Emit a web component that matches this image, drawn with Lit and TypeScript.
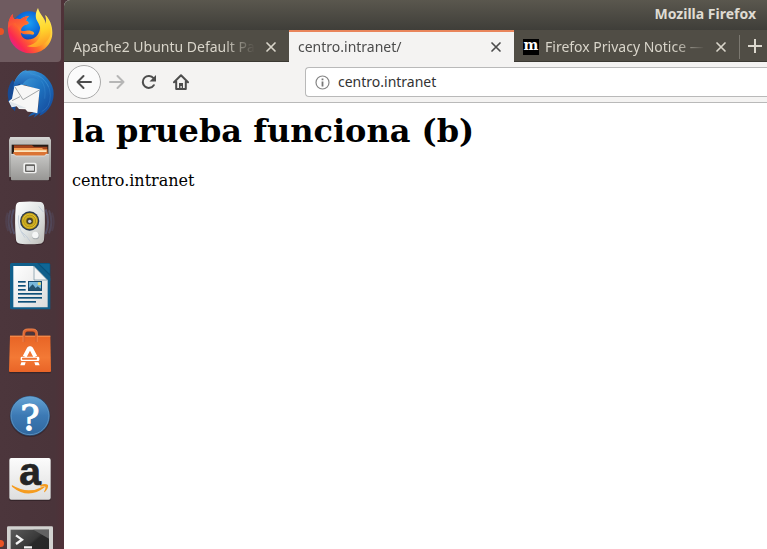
import { LitElement, html, svg, css, type TemplateResult } from "lit";
import { customElement, property } from "lit/decorators.js";
import { classMap } from "lit/directives/class-map.js";

interface LauncherApp {
  name: string;
  running?: boolean;
  focused?: boolean;
  icon: TemplateResult;
}

const firefox = svg`
  <defs>
    <radialGradient id="ffBlue" cx=".5" cy=".35" r=".6">
      <stop offset="0" stop-color="#1aa0f5"/><stop offset=".6" stop-color="#0b66d8"/><stop offset="1" stop-color="#1b3096"/>
    </radialGradient>
    <linearGradient id="ffBody" x1=".9" y1=".2" x2=".1" y2=".8">
      <stop offset="0" stop-color="#ffe44a"/><stop offset=".35" stop-color="#ffb52a"/>
      <stop offset=".6" stop-color="#ff6a2a"/><stop offset=".85" stop-color="#fb2a50"/><stop offset="1" stop-color="#e3208a"/>
    </linearGradient>
    <linearGradient id="ffTail" x1=".3" y1="0" x2=".5" y2="1">
      <stop offset="0" stop-color="#fff36a"/><stop offset=".6" stop-color="#ffd62c"/><stop offset="1" stop-color="#ff9a25"/>
    </linearGradient>
    <linearGradient id="ffHead" x1="0" y1="0" x2=".6" y2="1">
      <stop offset="0" stop-color="#f83a3e"/><stop offset="1" stop-color="#ff7a2c"/>
    </linearGradient>
  </defs>
  <circle cx="87" cy="84" r="50" fill="url(#ffBlue)"/>
  <path fill="url(#ffBody)" d="M38 42C26 56 21 76 25 100C30 136 58 160 91 160C130 160 157 132 157 98C157 76 149 57 136 45C139 60 139 70 136 80C133 64 126 52 119 44C126 84 119 112 92 118C72 121 62 108 63 98C72 105 86 102 99 104C106 100 102 95 92 92C80 90 72 95 65 92C58 88 62 79 76 74C89 72 88 66 78 62C80 56 83 52 87 48C78 48 68 52 62 58C55 56 47 56 42 58C38 52 38 46 38 42Z"/>
  <path fill="url(#ffHead)" d="M38 42C26 56 24 70 25 84C32 74 40 70 46 70L62 98C62 84 68 78 76 74C89 72 88 66 78 62C80 56 83 52 87 48C76 48 68 52 62 58C55 56 47 56 42 58C39 52 38 46 38 42Z"/>
  <path fill="url(#ffTail)" d="M114 24C106 38 105 52 112 64C122 80 127 99 116 116C108 129 94 136 80 138C112 149 145 130 151 104C155 83 148 57 136 45C139 54 139 64 138 71C133 51 119 43 114 24Z"/>`;

const thunderbird = svg`
  <defs>
    <linearGradient id="tbWing" x1="0" y1="0" x2="1" y2="1">
      <stop offset="0" stop-color="#4fa7df"/><stop offset=".5" stop-color="#1f75c2"/><stop offset="1" stop-color="#123f92"/>
    </linearGradient>
    <linearGradient id="tbBack" x1="0" y1="0" x2="0" y2="1">
      <stop offset="0" stop-color="#3996dc"/><stop offset="1" stop-color="#1650a2"/>
    </linearGradient>
  </defs>
  <path fill="#174b95" d="M38 48C24 64 20 88 26 108L22 106L30 120L34 130L45 142L50 110L58 76Z"/>
  <path fill="url(#tbWing)" d="M74 22C112 12 151 38 160 77C166 111 147 144 118 156L122 146L101 161L107 150L84 158L94 148L114 138L118 78L72 62L43 78C38 58 48 36 68 22L81 17Z"/>
  <path fill="url(#tbBack)" d="M40 68C43 46 57 28 81 17L74 26C91 24 106 33 115 48C96 38 80 43 68 60C60 59 49 70 43 82Z"/>
  <path fill="#0e3572" d="M48 65L60 59L57 68Z"/>
  <path fill="#f7f7f6" d="M43 67L65 62L119 76L112 148L96 144L83 143L76 136L57 135L50 127L35 130L26 112L36 104Z"/>
  <path fill="none" stroke="#a4a7a8" stroke-width="3" d="M45 69L69 107L118 78M36 110L60 98"/>
  <path fill="#c9d5df" opacity=".5" d="M28 112L35 128L49 124L57 133L78 132L62 125L48 119Z"/>
  <path fill="none" stroke="#57a9e3" stroke-width="2" opacity=".35" d="M115 34Q151 58 151 94T125 143M124 50Q139 69 134 104M90 29Q132 34 146 69"/>`;

const files = svg`
  <defs>
    <linearGradient id="fmTop" x1="0" y1="0" x2="0" y2="1"><stop offset="0" stop-color="#c8c8c6"/><stop offset="1" stop-color="#8c8b89"/></linearGradient>
    <linearGradient id="fmFront" x1="0" y1="0" x2="0" y2="1"><stop offset="0" stop-color="#c7c7c5"/><stop offset="1" stop-color="#979694"/></linearGradient>
  </defs>
  <path fill="#29191c" opacity=".5" d="M28 149H152V158H28Z"/>
  <path fill="url(#fmTop)" d="M31 27H148L153 36V147H27V36Z"/>
  <path fill="#ddd" d="M31 27H148L151 35H29Z" opacity=".6"/>
  <rect x="35" y="50" width="110" height="36" fill="#261b17"/>
  <path fill="#a3441d" d="M42 52H96L102 56H142V82H42Z"/>
  <path fill="#f39b50" d="M42 60H126L130 64H142V83H42Z"/>
  <path fill="#fbe4bd" d="M42 67H139V84H42Z"/>
  <path fill="#db7434" d="M40 72H142V85H40Z"/>
  <path fill="url(#fmFront)" d="M33 78H42L47 83H134L138 78H147V154Q147 157 144 157H36Q33 157 33 154Z"/>
  <path fill="none" stroke="#e7e7e6" stroke-width="2" d="M34 79H42L47 84H134L138 79H146"/>
  <rect x="70" y="104" width="40" height="32" rx="6" fill="#f0f0ef"/>
  <rect x="75" y="109" width="30" height="23" rx="3" fill="#666563"/>
  <rect x="79" y="114" width="23" height="14" fill="#ddd"/>`;

const music = svg`
  <defs>
    <linearGradient id="spBox" x1="0" y1="0" x2="1" y2="1"><stop offset="0" stop-color="#fff"/><stop offset=".55" stop-color="#dfe3e3"/><stop offset="1" stop-color="#bbb9b5"/></linearGradient>
    <radialGradient id="spCone"><stop offset=".25" stop-color="#a98c08"/><stop offset=".8" stop-color="#e9c735"/><stop offset="1" stop-color="#95780c"/></radialGradient>
  </defs>
  <g fill="none" stroke="#5f6a90" stroke-width="6">
    <path opacity=".5" d="M41 52Q27 89 43 126M137 52Q151 89 137 126"/>
    <path opacity=".35" d="M32 55Q18 89 34 124M147 55Q161 89 147 124"/>
    <path opacity=".2" d="M23 62Q13 90 25 117M156 62Q166 90 156 117"/>
  </g>
  <rect x="46" y="31" width="88" height="128" rx="16" fill="#27171c" opacity=".45"/>
  <path fill="url(#spBox)" d="M58 30Q89 27 122 30Q132 32 133 46Q137 90 132 143Q130 154 119 155Q89 159 61 155Q49 153 48 143Q43 90 47 45Q48 32 58 30Z"/>
  <path fill="none" stroke="#b8c4d4" stroke-width="3" opacity=".7" d="M56 70Q50 105 75 137M65 120Q80 130 91 149M116 43L130 60"/>
  <circle cx="89" cy="87" r="29" fill="#283850"/>
  <circle cx="89" cy="87" r="25" fill="url(#spCone)"/>
  <circle cx="89" cy="87" r="18" fill="none" stroke="#937507" stroke-width="2"/>
  <circle cx="89" cy="87" r="10" fill="#4b4428"/><circle cx="89" cy="88" r="5" fill="#c9cde0"/>
  <circle cx="107" cy="131" r="11" fill="#a8adb0"/><circle cx="106" cy="129" r="10" fill="#f5f6f6"/>`;

const writer = svg`
  <defs><linearGradient id="wrPage" x1="0" y1="0" x2="1" y2="1"><stop offset="0" stop-color="#fff"/><stop offset="1" stop-color="#dcdcdc"/></linearGradient></defs>
  <path fill="#105f8b" d="M35 21H104L151 67V160H35Q30 160 30 155V26Q30 21 35 21Z"/>
  <path fill="#09527b" d="M106 21H146Q151 21 151 26V62Z"/>
  <path fill="#0f6695" d="M118 23H149V53Z"/>
  <path fill="url(#wrPage)" d="M40 30H100L143 73V154H40Z"/>
  <path fill="#f4f4f4" stroke="#6d8c9b" stroke-width="2" d="M102 31V72H142Z"/>
  <path fill="#105f8b" d="M97 21H111L151 61V75Z"/>
  <g fill="#0e5079"><rect x="54" y="75" width="23" height="5"/><rect x="54" y="87" width="23" height="5"/><rect x="54" y="99" width="23" height="5"/><rect x="54" y="111" width="72" height="5"/><rect x="54" y="123" width="72" height="5"/><rect x="54" y="135" width="54" height="5"/></g>
  <rect x="84" y="75" width="42" height="30" fill="#164b70"/>
  <rect x="87" y="78" width="36" height="24" fill="#79b8db"/>
  <circle cx="118" cy="83" r="5" fill="#e5d974"/>
  <path fill="#25536d" d="M87 102V96L98 85L107 96L113 91L123 98V102Z"/>`;

const software = svg`
  <defs><linearGradient id="swBag" x1="0" y1="0" x2="0" y2="1"><stop offset="0" stop-color="#e86425"/><stop offset=".6" stop-color="#f37935"/><stop offset="1" stop-color="#e96427"/></linearGradient></defs>
  <path fill="#26171b" opacity=".5" d="M28 146H152V160H28Z"/>
  <path fill="none" stroke="#9d3a1b" stroke-width="7" d="M72 66V43Q72 32 83 32H97Q109 32 109 43V66"/>
  <path fill="url(#swBag)" d="M30 47H151L153 153Q153 156 150 156H30Q27 156 27 153Z"/>
  <path fill="#f69355" d="M30 47H151V50H30Z"/>
  <path fill="none" stroke="#db6530" stroke-width="7" d="M72 66V41Q72 30 83 30H97Q109 30 109 41V66"/>
  <path fill="none" stroke="#f5915a" stroke-width="2" d="M69 66V39Q69 27 83 27H97Q112 27 112 39V66"/>
  <path fill="none" stroke="#fff" stroke-width="12" stroke-linejoin="bevel" d="M74 110L87 85H93L106 110"/>
  <rect x="62" y="110" width="56" height="13" rx="4" fill="#fff"/>
  <rect x="66" y="113" width="45" height="6" rx="2" fill="#ef7434"/>
  <path fill="#fff" d="M64 127H77L74 136H61ZM103 127H115L119 136H106Z"/>`;

const help = svg`
  <defs><linearGradient id="hpBall" x1="0" y1="0" x2="0" y2="1"><stop offset="0" stop-color="#63a2d3"/><stop offset=".5" stop-color="#3c79b4"/><stop offset="1" stop-color="#31689f"/></linearGradient></defs>
  <circle cx="90" cy="98" r="61" fill="#21171e" opacity=".4"/>
  <circle cx="90" cy="95" r="60" fill="#28517e"/>
  <circle cx="90" cy="95" r="57" fill="url(#hpBall)" stroke="#70a8d3" stroke-width="2"/>
  <text x="90" y="137" text-anchor="middle" class="question">?</text>`;

const amazon = svg`
  <defs><linearGradient id="azTile" x1="0" y1="0" x2="0" y2="1"><stop offset="0" stop-color="#fcfcfc"/><stop offset="1" stop-color="#dedede"/></linearGradient></defs>
  <rect x="27" y="31" width="126" height="128" rx="6" fill="#20151a" opacity=".5"/>
  <rect x="28" y="30" width="124" height="125" rx="6" fill="url(#azTile)"/>
  <text x="90" y="111" text-anchor="middle" class="letter">a</text>
  <path fill="#f59c20" d="M37 112Q83 140 128 116Q133 114 134 118Q85 156 36 116Q34 112 37 112Z"/>
  <path fill="#f59c20" d="M120 112Q135 105 144 111Q146 121 134 133Q131 133 133 129Q138 118 136 116Q131 114 122 116Z"/>`;

const terminal = svg`
  <defs><linearGradient id="tmScreen" x1="0" y1="0" x2="1" y2="1"><stop offset="0" stop-color="#5b5b5b"/><stop offset=".45" stop-color="#393939"/><stop offset=".5" stop-color="#292929"/><stop offset="1" stop-color="#242424"/></linearGradient></defs>
  <rect x="21" y="43" width="138" height="119" rx="4" fill="#d2d2d0"/>
  <rect x="32" y="53" width="115" height="98" fill="url(#tmScreen)"/>
  <path fill="#626262" d="M100 53H147V80Z"/>
  <path fill="none" stroke="#f4f4f4" stroke-width="7" d="M48 70L66 83L48 96M72 106H96"/>`;

const apps: LauncherApp[] = [
  { name: "Firefox", running: true, focused: true, icon: firefox },
  { name: "Thunderbird", icon: thunderbird },
  { name: "Files", icon: files },
  { name: "Rhythmbox", icon: music },
  { name: "LibreOffice Writer", icon: writer },
  { name: "Ubuntu Software", icon: software },
  { name: "Help", icon: help },
  { name: "Amazon", icon: amazon },
  { name: "Terminal", running: true, icon: terminal },
];

@customElement("app-launcher")
class AppLauncher extends LitElement {
  static styles = css`
    :host { display: block; flex: none; width: 64px; overflow: hidden; background: linear-gradient(90deg, #4c363c, #4a343a 85%, #503138); }
    nav { display: flex; flex-direction: column; }
    button { display: block; flex: none; width: 64px; height: 64px; padding: 0; border: 0; background: none; position: relative; }
    button svg { display: block; width: 64px; height: 64px; }
    .plate { fill: #6f5b60; }
    .dot { position: absolute; left: -3px; top: 28px; width: 7px; height: 7px; border-radius: 50%; background: #e95325; }
    .question { font: 108px "DejaVu Serif", serif; fill: #fff; stroke: #fff; stroke-width: 3px; }
    .letter { font: bold 117px "Liberation Sans", sans-serif; fill: #242424; stroke: #242424; stroke-width: 2px; }
  `;
  render() {
    return html`<nav aria-label="Launcher">${apps.map(
      (app) => html`<button aria-label=${app.name} class=${classMap({ focused: !!app.focused })}>
        <svg viewBox="0 0 192 192" aria-hidden="true">
          ${app.focused ? svg`<rect class="plate" x="-12" y="-12" width="195" height="198" rx="12"/>` : ""}${app.icon}
        </svg>
        ${app.running ? html`<span class="dot"></span>` : ""}
      </button>`
    )}</nav>`;
  }
}

@customElement("browser-tab")
class BrowserTab extends LitElement {
  @property() label = "";
  @property({ type: Boolean, reflect: true }) active = false;
  @property({ type: Boolean }) mozilla = false;
  static styles = css`
    :host { display: flex; flex: 0 0 225px; min-width: 0; width: 225px; box-sizing: border-box; align-items: center; gap: 6px; padding: 2px 8px 0 9px; color: #d9d5ca; border-bottom: 1px solid #3b3933; }
    :host([active]) { background: #f4f3f2; color: #4c4c4c; border-top: 2px solid #e9855b; border-bottom-color: #f4f3f2; padding-top: 0; }
    .favicon { flex: none; width: 16px; height: 16px; background: #000; color: #fff; font: bold 14px/13px "DejaVu Serif", serif; text-align: center; }
    .title { flex: 1; min-width: 0; overflow: hidden; white-space: nowrap; font: 14px/20px "Noto Sans", sans-serif; color: inherit; text-decoration: none; mask-image: linear-gradient(90deg, #000 calc(100% - 32px), transparent); }
    button { flex: none; width: 20px; height: 20px; padding: 0; border: 0; background: none; color: inherit; }
    svg { display: block; margin: auto; }
  `;
  render() {
    return html`
      ${this.mozilla ? html`<span class="favicon">m</span>` : ""}
      <a class="title" href="#">${this.label}</a>
      <button aria-label="Close tab"><svg width="12" height="12" viewBox="0 0 12 12"><path d="M2 2L10 10M10 2L2 10" stroke="currentColor" stroke-width="1.7" stroke-linecap="round"/></svg></button>`;
  }
}

@customElement("app-root")
class AppRoot extends LitElement {
  static styles = css`
    :host { display: flex; height: 100vh; overflow: hidden; background: #4a343a; }
    .window { flex: 1; min-width: 0; display: flex; flex-direction: column; background: #fff; }
    .titlebar { height: 30px; flex: none; box-sizing: border-box; padding: 0 11px; background: linear-gradient(#5a574e, #3f3e39); border-top-left-radius: 6px; box-shadow: 0 0 0 6px #4a343a; clip-path: inset(0); color: #dfdbd2; font: bold 14px/28px "Noto Sans", sans-serif; text-align: right; }
    .tabs { display: flex; height: 32px; flex: none; background: #504d45; overflow: hidden; }
    .new-tab { flex: 1 0 28px; min-width: 0; padding: 0 0 0 9px; border: 0; border-bottom: 1px solid #3b3933; background: linear-gradient(#7b7870, #7b7870) 0 5px / 1px 24px no-repeat; color: #dcd8ce; }
    .toolbar { display: flex; align-items: center; height: 41px; flex: none; box-sizing: border-box; padding-left: 3px; background: #f4f3f2; border-bottom: 1px solid #b9b9b9; color: #4d4d4d; }
    .toolbar button { flex: none; width: 32px; height: 34px; padding: 0; border: 0; background: none; color: inherit; }
    .toolbar button.back { width: 34px; border: 1px solid #aaa; border-radius: 50%; background: #fbfbfb; }
    .toolbar button.forward { color: #b6b6b6; }
    svg { display: block; margin: auto; }
    .new-tab svg { margin: 0; }
    .address { display: flex; align-items: center; gap: 8px; flex: 1; min-width: 0; height: 30px; box-sizing: border-box; margin-left: 108px; padding-left: 9px; border: 1px solid #b9b9b9; border-right: 0; border-radius: 4px 0 0 4px; background: #fff; }
    .address svg { flex: none; margin: 0; }
    input { flex: 1; min-width: 0; padding: 0; border: 0; outline: 0; background: none; color: #333; font: 14px/20px "Noto Sans", sans-serif; }
    main { flex: 1; padding: 8px; color: #000; font: 16px/19px "DejaVu Serif", serif; }
    h1 { margin: 0 0 20px; font-size: 32px; line-height: 40px; }
    p { margin: 0; }
  `;
  render() {
    return html`
      <app-launcher></app-launcher>
      <div class="window">
        <header class="titlebar">Mozilla Firefox</header>
        <div class="tabs">
          <browser-tab label="Apache2 Ubuntu Default Pag"></browser-tab>
          <browser-tab label="centro.intranet/" active></browser-tab>
          <browser-tab label="Firefox Privacy Notice —" mozilla></browser-tab>
          <button class="new-tab" aria-label="New tab"><svg width="14" height="14" viewBox="0 0 14 14"><path d="M7 0V14M0 7H14" stroke="currentColor" stroke-width="2"/></svg></button>
        </div>
        <div class="toolbar">
          <button class="back" aria-label="Back"><svg width="16" height="16" viewBox="0 0 16 16"><path d="M15 8H1.5M7.5 2L1.5 8L7.5 14" fill="none" stroke="currentColor" stroke-width="2" stroke-linecap="round" stroke-linejoin="round"/></svg></button>
          <button class="forward" aria-label="Forward"><svg width="16" height="16" viewBox="0 0 16 16"><path d="M1 8H14.5M8.5 2L14.5 8L8.5 14" fill="none" stroke="currentColor" stroke-width="2" stroke-linecap="round" stroke-linejoin="round"/></svg></button>
          <button aria-label="Reload"><svg width="16" height="16" viewBox="0 0 16 16"><path d="M12.8 11.2A6 6 0 1 1 12.5 4.2" fill="none" stroke="currentColor" stroke-width="2" stroke-linecap="round"/><path d="M15 1V7.5H8.5Z" fill="currentColor"/></svg></button>
          <button aria-label="Home"><svg width="16" height="16" viewBox="0 0 16 16"><path d="M1 8.3L8 1.3L15 8.3M3.2 7.5V15H12.8V7.5" fill="none" stroke="currentColor" stroke-width="2" stroke-linecap="round" stroke-linejoin="round"/><path d="M6 9H10V15H8.7V12H7.5V15H6Z" fill="currentColor"/></svg></button>
          <label class="address">
            <svg width="15" height="15" viewBox="0 0 15 15" aria-hidden="true"><circle cx="7.5" cy="7.5" r="6.5" fill="none" stroke="#858585" stroke-width="1.2"/><path d="M7.5 3.5V5.2M7.5 6.5V11.5" stroke="#777" stroke-width="1.8"/></svg>
            <input aria-label="Address" value="centro.intranet">
          </label>
        </div>
        <main><h1>la prueba funciona (b)</h1><p>centro.intranet</p></main>
      </div>`;
  }
}
